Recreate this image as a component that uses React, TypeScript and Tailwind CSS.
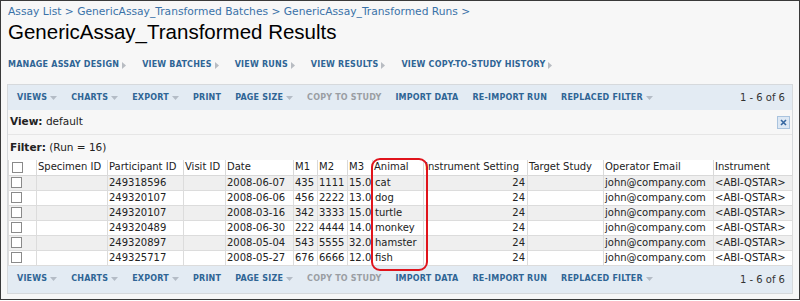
import React from "react";

const rows = [
  { pid: "249318596", date: "2008-06-07", m1: "435", m2: "1111", m3: "15.0", animal: "cat" },
  { pid: "249320107", date: "2008-06-06", m1: "456", m2: "2222", m3: "13.0", animal: "dog" },
  { pid: "249320107", date: "2008-03-16", m1: "342", m2: "3333", m3: "15.0", animal: "turtle" },
  { pid: "249320489", date: "2008-06-30", m1: "222", m2: "4444", m3: "14.0", animal: "monkey" },
  { pid: "249320897", date: "2008-05-04", m1: "543", m2: "5555", m3: "32.0", animal: "hamster" },
  { pid: "249325717", date: "2008-05-27", m1: "676", m2: "6666", m3: "12.0", animal: "fish" },
];

const widths = [28, 71, 76, 42, 68, 24, 30, 25, 51, 104, 76, 110, 79];
const headers = [
  "",
  "Specimen ID",
  "Participant ID",
  "Visit ID",
  "Date",
  "M1",
  "M2",
  "M3",
  "Animal",
  "Instrument Setting",
  "Target Study",
  "Operator Email",
  "Instrument",
];

function DownArrow() {
  return (
    <svg className="ml-[3px] inline-block" width="7" height="4" viewBox="0 0 7 4">
      <path d="M0 0h7L3.5 4z" fill="#b4bcc6" />
    </svg>
  );
}

function RightArrow() {
  return (
    <svg className="ml-[3px] inline-block" width="4" height="7" viewBox="0 0 4 7">
      <path d="M0 0v7l4-3.5z" fill="#b8bcc2" />
    </svg>
  );
}

function Checkbox() {
  return <span className="ml-[2px] inline-block h-[11px] w-[11px] border border-[#8a8a8a] bg-white align-middle" />;
}

function Toolbar({ className }: { className?: string }) {
  const items: { label: string; menu?: boolean; disabled?: boolean }[] = [
    { label: "VIEWS", menu: true },
    { label: "CHARTS", menu: true },
    { label: "EXPORT", menu: true },
    { label: "PRINT" },
    { label: "PAGE SIZE", menu: true },
    { label: "COPY TO STUDY", disabled: true },
    { label: "IMPORT DATA" },
    { label: "RE-IMPORT RUN" },
    { label: "REPLACED FILTER", menu: true },
  ];
  return (
    <div className={`flex items-center bg-[#e3ebf3] pl-[9px] pr-[7px] ${className ?? ""}`}>
      <div className="flex items-center gap-[14px] text-[8px] font-bold tracking-[0.2px]">
        {items.map((it) => (
          <span
            key={it.label}
            className={`flex items-center ${it.disabled ? "text-[#9a9ea3]" : "text-[#2f6595]"}`}
          >
            {it.label}
            {it.menu && <DownArrow />}
          </span>
        ))}
      </div>
      <span className="ml-auto text-[10px] text-[#333]">1 - 6 of 6</span>
    </div>
  );
}

export default function App() {
  return (
    <div
      className="relative h-[300px] w-[800px] overflow-hidden border border-[#3a3a3a] bg-[#f7f7f7] text-[#222]"
      style={{ fontFamily: "'DejaVu Sans', Verdana, sans-serif" }}
    >
      {/* breadcrumb + title */}
      <div className="px-[7px] pt-[4px] text-[10.7px] leading-[13px] text-[#3a72a8]">
        Assay List &gt; GenericAssay_Transformed Batches &gt; GenericAssay_Transformed Runs &gt;
      </div>
      <h1
        className="px-[7px] pt-[2px] text-[20.5px] leading-[24px] text-black"
        style={{ fontFamily: "'Liberation Sans', Arial, sans-serif" }}
      >
        GenericAssay_Transformed Results
      </h1>

      {/* assay nav links */}
      <div className="mt-[15px] flex items-center gap-[16px] px-[7px] text-[8px] font-bold tracking-[0.2px] text-[#2f6595]">
        {["MANAGE ASSAY DESIGN", "VIEW BATCHES", "VIEW RUNS", "VIEW RESULTS", "VIEW COPY-TO-STUDY HISTORY"].map((l) => (
          <span key={l} className="flex items-center">
            {l}
            <RightArrow />
          </span>
        ))}
      </div>

      {/* grid panel */}
      <div className="mx-[6px] mt-[13px] border border-[#d6d9dc] bg-[#f7f7f7]">
        <Toolbar className="h-[25px]" />

        <div className="flex h-[25px] items-center justify-between border-b border-[#e6e6e6] pl-[2px] pr-[2px] text-[10.5px]">
          <span>
            <b>View:</b> default
          </span>
          <span className="flex h-[13px] w-[13px] items-center justify-center border border-[#a9c3de] bg-[#dde8f4]">
            <svg width="7" height="7" viewBox="0 0 7 7">
              <path d="M1 1l5 5M6 1L1 6" stroke="#3566a0" strokeWidth="1.6" />
            </svg>
          </span>
        </div>
        <div className="flex h-[25px] items-center pl-[2px] text-[10.5px]">
          <span>
            <b>Filter:</b> (Run = 16)
          </span>
        </div>

        <table className="table-fixed border-collapse text-[10px] leading-[14px]" style={{ width: 783 }}>
          <colgroup>
            {widths.map((w, i) => (
              <col key={i} style={{ width: w }} />
            ))}
          </colgroup>
          <thead>
            <tr className="h-[15px] bg-white">
              {headers.map((h, i) => (
                <th
                  key={i}
                  className="overflow-hidden whitespace-nowrap border-x border-b border-[#d9d9d9] pl-[1px] text-left font-normal"
                >
                  {i === 0 ? <Checkbox /> : h}
                </th>
              ))}
            </tr>
          </thead>
          <tbody>
            {rows.map((r, idx) => (
              <tr key={idx} className={`h-[15px] ${idx % 2 === 0 ? "bg-[#efefef]" : "bg-white"}`}>
                <td className="border-x border-b border-[#dcdcdc]">
                  <Checkbox />
                </td>
                <td className="border-x border-b border-[#dcdcdc]" />
                <td className="border-x border-b border-[#dcdcdc] pl-[1px]">{r.pid}</td>
                <td className="border-x border-b border-[#dcdcdc]" />
                <td className="overflow-hidden whitespace-nowrap border-x border-b border-[#dcdcdc] pl-[1px]">{r.date}</td>
                <td className="overflow-hidden whitespace-nowrap border-x border-b border-[#dcdcdc] pl-[1px]">{r.m1}</td>
                <td className="overflow-hidden whitespace-nowrap border-x border-b border-[#dcdcdc] pl-[1px]">{r.m2}</td>
                <td className="overflow-hidden whitespace-nowrap border-x border-b border-[#dcdcdc] pl-[1px]">{r.m3}</td>
                <td className="overflow-hidden whitespace-nowrap border-x border-b border-[#dcdcdc] pl-[2px]">{r.animal}</td>
                <td className="border-x border-b border-[#dcdcdc] pr-[2px] text-right">24</td>
                <td className="border-x border-b border-[#dcdcdc]" />
                <td className="overflow-hidden whitespace-nowrap border-x border-b border-[#dcdcdc] pl-[1px]">john@company.com</td>
                <td className="overflow-hidden whitespace-nowrap border-x border-b border-[#dcdcdc] pl-[1px]">&lt;ABI-QSTAR&gt;</td>
              </tr>
            ))}
          </tbody>
        </table>

        <Toolbar className="h-[27px]" />
      </div>

      {/* annotation around the Animal column */}
      <div className="absolute left-[370px] top-[157px] h-[113px] w-[57px] rounded-[9px] border-2 border-[#e0141c]" />
    </div>
  );
}
